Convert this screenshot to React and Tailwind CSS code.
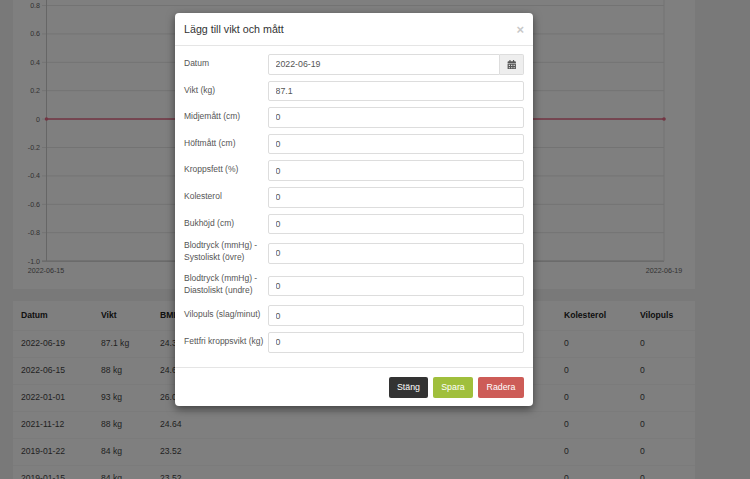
// App.jsx
import React from 'react';
import { FaCalendarAlt } from 'react-icons/fa';

const fields = [
  { label: 'Vikt (kg)', value: '87.1' },
  { label: 'Midjemått (cm)', value: '0' },
  { label: 'Höftmått (cm)', value: '0' },
  { label: 'Kroppsfett (%)', value: '0' },
  { label: 'Kolesterol', value: '0' },
  { label: 'Bukhöjd (cm)', value: '0', row: 'mb-[3px]' },
  { label: 'Blodtryck (mmHg) - Systoliskt (övre)', value: '0', two: true },
  { label: 'Blodtryck (mmHg) - Diastoliskt (undre)', value: '0', two: true },
  { label: 'Vilopuls (slag/minut)', value: '0' },
  { label: 'Fettfri kroppsvikt (kg)', value: '0' },
];

const rows = [
  ['2022-06-19', '87.1 kg', '24.39'],
  ['2022-06-15', '88 kg', '24.64'],
  ['2022-01-01', '93 kg', '26.04'],
  ['2021-11-12', '88 kg', '24.64'],
  ['2019-01-22', '84 kg', '23.52'],
  ['2019-01-15', '84 kg', '23.52'],
];

const ticks = ['0.8', '0.6', '0.4', '0.2', '0', '-0.2', '-0.4', '-0.6', '-0.8', '-1.0'];

const Chart = () => (
  <svg width="682" height="289" className="block" fontFamily="Liberation Sans, sans-serif" fontSize="7.1" fill="#666">
    {ticks.map((t, i) => {
      const y = 5.5 + i * 28.4;
      return (
        <g key={t}>
          <line x1="29" x2="651" y1={y} y2={y} stroke={i === 9 ? '#bbb' : '#e6e6e6'} />
          <text x="27" y={y + 2.5} textAnchor="end">{t}</text>
        </g>
      );
    })}
    <line x1="33.5" x2="33.5" y1="0" y2="261" stroke="#ccc" />
    <line x1="651" x2="651" y1="0" y2="261" stroke="#e6e6e6" />
    <line x1="33.5" x2="651" y1="119" y2="119" stroke="#e66a86" strokeWidth="1.6" />
    <circle cx="33.5" cy="119" r="1.8" fill="#e66a86" />
    <circle cx="651" cy="119" r="1.8" fill="#e66a86" />
    <text x="33" y="272.5" textAnchor="middle">2022-06-15</text>
    <text x="651" y="272.5" textAnchor="middle">2022-06-19</text>
  </svg>
);

const Field = ({ label, value, two, row = '' }) => (
  <div className={`flex items-start mb-[6px] ${two ? 'pb-[3px]' : ''} ${row}`}>
    <label className={`w-[84px] shrink-0 text-[8.5px] leading-[12px] text-[#555] ${two ? 'pr-1 -mt-[1px]' : 'pt-[3px]'}`}>
      {label}
    </label>
    <input
      readOnly
      value={value}
      className={`w-[256px] h-[20.6px] px-[6.5px] text-[8.8px] text-[#555] bg-white border border-[#ddd] rounded-[2px] ${two ? 'mt-[3px]' : ''}`}
    />
  </div>
);

const App = () => (
  <div className="relative h-screen overflow-hidden bg-[#f3f3f3] font-['Liberation_Sans',sans-serif]">
    <div className="w-[682px] ml-[13px]">
      <div className="bg-white h-[289px]">
        <Chart />
      </div>
      <div className="bg-white mt-[12px] pt-[1px]">
        <table className="w-[682px] table-fixed text-[8.6px] text-[#444]">
          <colgroup>
            <col className="w-[80px]" />
            <col className="w-[59px]" />
            <col className="w-[404px]" />
            <col className="w-[76px]" />
            <col className="w-[63px]" />
          </colgroup>
          <thead>
            <tr className="h-[28px] border-b border-[#f7f7f7] text-left text-[#222]">
              <th className="px-2 font-bold">Datum</th>
              <th className="px-2 font-bold">Vikt</th>
              <th className="px-2 font-bold">BMI</th>
              <th className="px-2 font-bold">Kolesterol</th>
              <th className="px-2 font-bold">Vilopuls</th>
            </tr>
          </thead>
          <tbody>
            {rows.map((r) => (
              <tr key={r[0]} className="h-[27px] border-b border-[#f7f7f7]">
                <td className="px-2">{r[0]}</td>
                <td className="px-2">{r[1]}</td>
                <td className="px-2">{r[2]}</td>
                <td className="px-2">0</td>
                <td className="px-2">0</td>
              </tr>
            ))}
          </tbody>
        </table>
      </div>
    </div>

    {/* modal */}
    <div className="absolute inset-0 bg-black/50" />
    <div className="absolute left-[175px] top-[13px] w-[358px] h-[393px] flex flex-col bg-white rounded-[4px] shadow-[0_3px_9px_rgba(0,0,0,0.5)]">
      <div className="h-[33px] shrink-0 flex items-center justify-between px-[9px] border-b border-[#e5e5e5]">
        <h4 className="text-[10.7px] text-[#333]">Lägg till vikt och mått</h4>
        <span className="text-[13px] font-bold leading-none text-[#c8c8c8]">×</span>
      </div>
      <div className="flex-1 pt-[8px] pl-[9px]">
        <div className="flex items-start mb-[6px]">
          <label className="w-[84px] shrink-0 pt-[3px] text-[8.5px] leading-[12px] text-[#555]">Datum</label>
          <div className="flex w-[256px] h-[20.6px]">
            <input
              readOnly
              value="2022-06-19"
              className="flex-1 min-w-0 px-[6.5px] text-[8.8px] text-[#555] bg-white border border-[#ddd] rounded-l-[2px]"
            />
            <span className="w-[24px] flex items-center justify-center bg-[#eee] border border-l-0 border-[#ddd] rounded-r-[2px] text-[#555]">
              <FaCalendarAlt size={9.5} />
            </span>
          </div>
        </div>
        {fields.map((f) => (
          <Field key={f.label} {...f} />
        ))}
      </div>
      <div className="h-[39px] shrink-0 flex justify-end items-start gap-[5px] pt-[9px] pr-[9px] border-t border-[#e5e5e5] text-[8.8px] text-white">
        <button className="w-[39px] h-[21px] bg-[#333] rounded-[2px]">Stäng</button>
        <button className="w-[40px] h-[21px] bg-[#a0bf3c] rounded-[2px]">Spara</button>
        <button className="w-[46px] h-[21px] bg-[#cd5c57] rounded-[2px]">Radera</button>
      </div>
    </div>
  </div>
);

export default App;
